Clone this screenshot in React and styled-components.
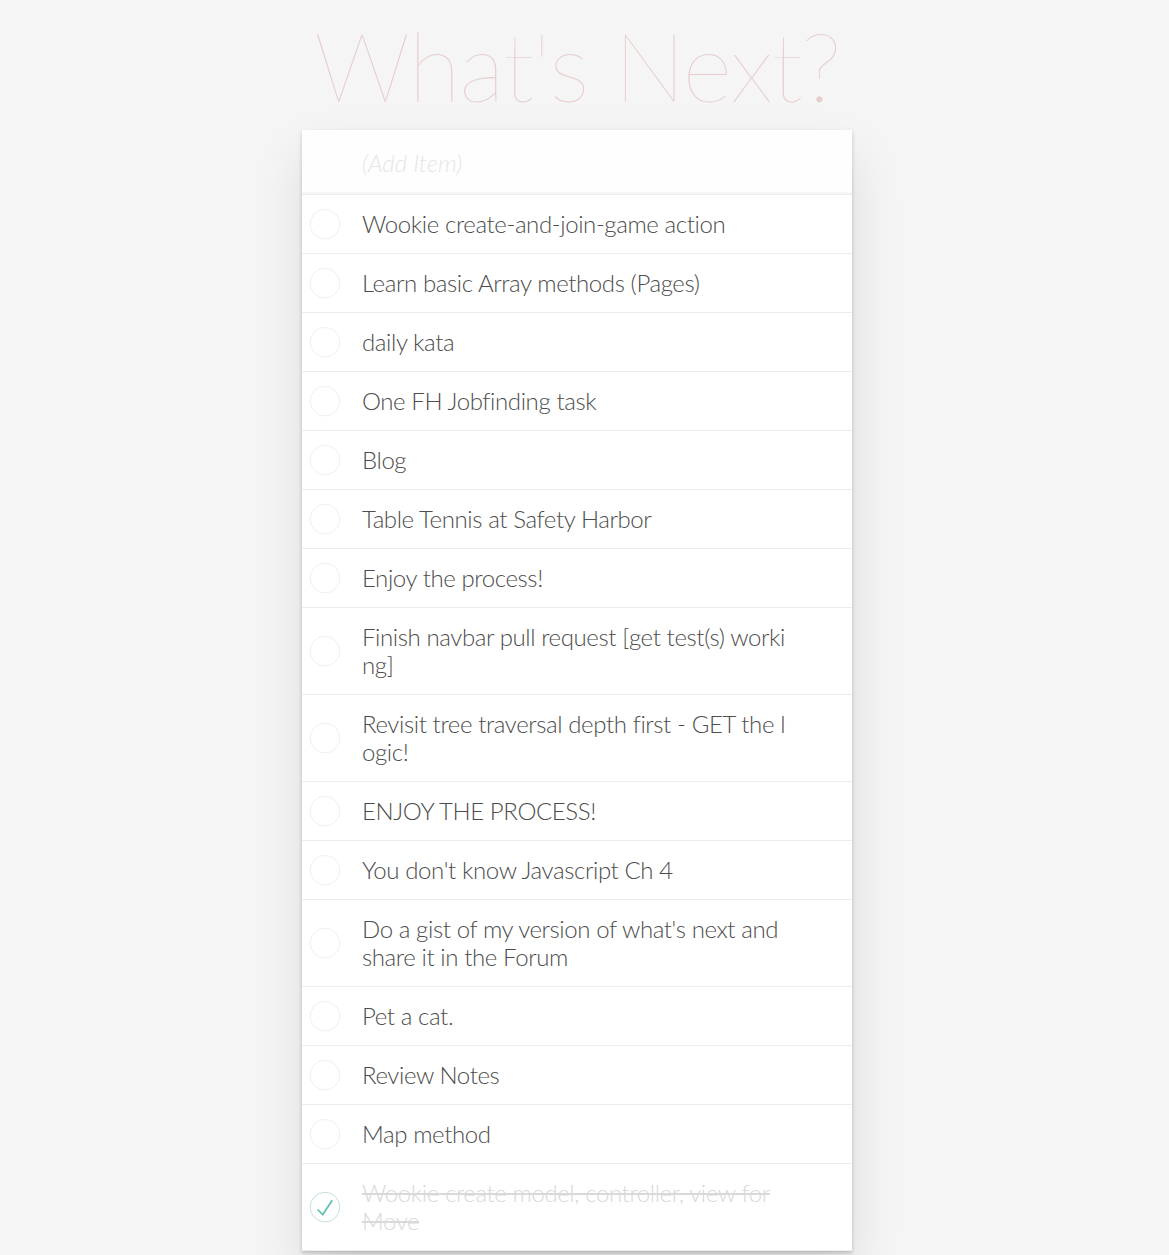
import React, { useState } from 'react';
import styled, { createGlobalStyle } from 'styled-components';

const GlobalStyle = createGlobalStyle`
  html, body {
    margin: 0;
    padding: 0;
  }
  body {
    background: #f5f5f5;
    color: #4d4d4d;
    font-family: Lato, "Liberation Sans", sans-serif;
    font-weight: 300;
    -webkit-font-smoothing: antialiased;
  }
`;

const Page = styled.div`
  padding: 15px 15px 40px 0;
`;

const Title = styled.h1`
  margin: 0 0 15px;
  font-size: 96px;
  line-height: 100px;
  font-weight: 200;
  letter-spacing: -1.5px;
  text-align: center;
  color: rgba(175, 47, 47, 0.2);
`;

const Card = styled.section`
  width: 550px;
  margin: 0 auto;
  background: #fff;
  box-shadow: 0 2px 4px 0 rgba(0, 0, 0, 0.2), 0 25px 50px 0 rgba(0, 0, 0, 0.1);
`;

const NewTodo = styled.input`
  display: block;
  box-sizing: border-box;
  width: 100%;
  height: 65px;
  margin: 0;
  padding: 16px 16px 16px 60px;
  border: none;
  border-bottom: 1px solid #ededed;
  background: rgba(0, 0, 0, 0.003);
  box-shadow: inset 0 -2px 1px rgba(0, 0, 0, 0.03);
  font-family: inherit;
  font-size: 24px;
  font-weight: 300;
  color: inherit;
  outline: none;

  &::placeholder {
    font-style: italic;
    font-weight: 300;
    color: #e6e6e6;
  }
`;

const List = styled.ul`
  margin: 0;
  padding: 0;
  list-style: none;
`;

const Row = styled.li`
  display: flex;
  align-items: center;
  border-bottom: 1px solid #ededed;
  font-size: 24px;
`;

const Toggle = styled.button`
  flex: 0 0 40px;
  height: 40px;
  padding: 0;
  border: none;
  background: none;
  cursor: pointer;

  svg {
    display: block;
  }
`;

const Label = styled.label`
  flex: 1;
  padding: 15px 60px 15px 20px;
  line-height: 28px;
  letter-spacing: -0.4px;
  word-break: break-all;
  color: ${(p) => (p.$done ? '#d9d9d9' : '#4d4d4d')};
  text-decoration: ${(p) => (p.$done ? 'line-through' : 'none')};
`;

const Circle = ({ done }) => (
  <svg width="40" height="40" viewBox="-10 -18 100 135">
    <circle cx="50" cy="50" r="50" fill="none" stroke={done ? '#bddad5' : '#ededed'} strokeWidth="3" />
    {done && <path fill="#5dc2af" d="M72 25L42 71 27 56l-4 4 20 20 34-52z" />}
  </svg>
);

const initial = [
  'Wookie create-and-join-game action',
  'Learn basic Array methods (Pages)',
  'daily kata',
  'One FH Jobfinding task',
  'Blog',
  'Table Tennis at Safety Harbor',
  'Enjoy the process!',
  'Finish navbar pull request [get test(s) working]',
  'Revisit tree traversal depth first - GET the logic!',
  'ENJOY THE PROCESS!',
  "You don't know Javascript Ch 4",
  "Do a gist of my version of what's next and share it in the Forum",
  'Pet a cat.',
  'Review Notes',
  'Map method',
].map((text) => ({ text, done: false }));

initial.push({ text: 'Wookie create model, controller, view for Move', done: true });

const App = () => {
  const [todos, setTodos] = useState(initial);

  const toggle = (i) =>
    setTodos((list) => list.map((t, j) => (j === i ? { ...t, done: !t.done } : t)));

  return (
    <>
      <GlobalStyle />
      <Page>
        <Title>What's Next?</Title>
        <Card>
          <NewTodo placeholder="(Add Item)" />
          <List>
            {todos.map((t, i) => (
              <Row key={i}>
                <Toggle onClick={() => toggle(i)}>
                  <Circle done={t.done} />
                </Toggle>
                <Label $done={t.done}>{t.text}</Label>
              </Row>
            ))}
          </List>
        </Card>
      </Page>
    </>
  );
};

export default App;
